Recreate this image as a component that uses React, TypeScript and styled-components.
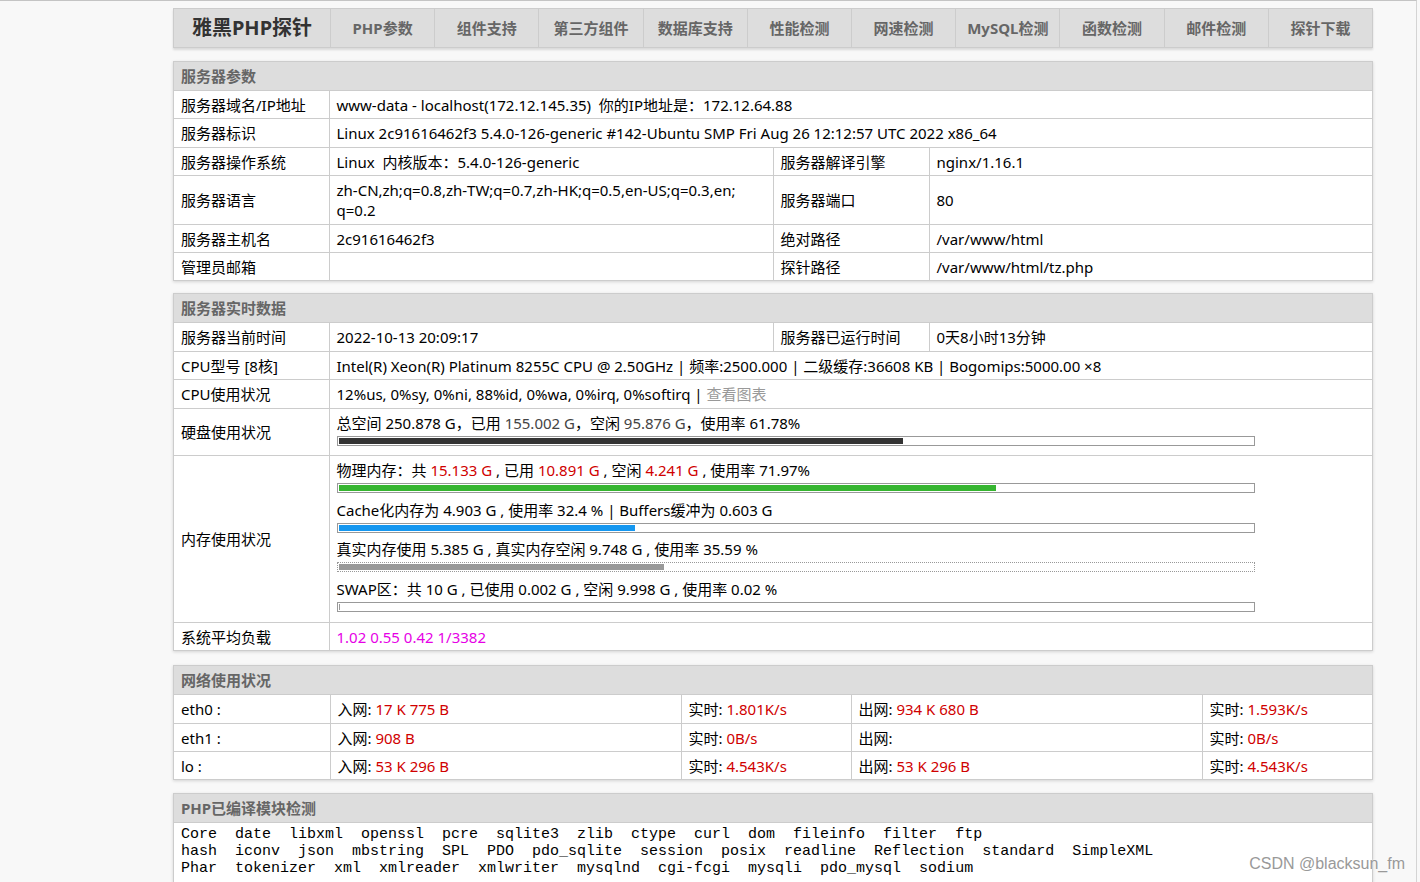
import React from 'react';
import styled, { createGlobalStyle } from 'styled-components';

const GlobalStyle = createGlobalStyle`
  html, body {
    margin: 0;
    padding: 0;
    background: #f8f8f8;
  }
  body {
    font-family: "Segoe UI", "Noto Sans", "Noto Sans CJK SC", sans-serif;
    font-size: 15px;
    color: #000;
  }
`;

const navItems = ['PHP参数', '组件支持', '第三方组件', '数据库支持', '性能检测', '网速检测', 'MySQL检测', '函数检测', '邮件检测', '探针下载'];

const modules = [
  ['Core', 'date', 'libxml', 'openssl', 'pcre', 'sqlite3', 'zlib', 'ctype', 'curl', 'dom', 'fileinfo', 'filter', 'ftp'],
  ['hash', 'iconv', 'json', 'mbstring', 'SPL', 'PDO', 'pdo_sqlite', 'session', 'posix', 'readline', 'Reflection', 'standard', 'SimpleXML'],
  ['Phar', 'tokenizer', 'xml', 'xmlreader', 'xmlwriter', 'mysqlnd', 'cgi-fcgi', 'mysqli', 'pdo_mysql', 'sodium'],
];

const netRows = [
  { name: 'eth0 :', rx: '17 K 775 B', rxRate: '1.801K/s', tx: '934 K 680 B', txRate: '1.593K/s' },
  { name: 'eth1 :', rx: '908 B', rxRate: '0B/s', tx: '', txRate: '0B/s' },
  { name: 'lo :', rx: '53 K 296 B', rxRate: '4.543K/s', tx: '53 K 296 B', txRate: '4.543K/s' },
];

const Page = styled.div`
  position: relative;
  box-sizing: border-box;
  width: 1417px;
  min-height: 882px;
  border-top: 1px solid #c4c4c4;
  border-right: 1px solid #d4d4d4;
  padding-top: 7px;
`;

const Container = styled.div`
  width: 1200px;
  margin-left: 173px;
`;

const Nav = styled.div`
  display: flex;
  height: 40px;
  background: #ddd;
  border: 1px solid #ccc;
  box-sizing: border-box;
  box-shadow: 0 2px 2px rgba(0, 0, 0, 0.12);
`;

const Logo = styled.div`
  width: 156px;
  flex-shrink: 0;
  text-align: center;
  line-height: 38px;
  font-size: 20px;
  font-weight: bold;
  color: #333;
`;

const NavItem = styled.div`
  flex: 1;
  border-left: 1px solid #ccc;
  text-align: center;
  line-height: 38px;
  font-size: 15px;
  font-weight: bold;
  color: #666;
`;

const Section = styled.div<{ $gap: number }>`
  margin-top: ${(p) => p.$gap}px;
  background: #fff;
  border: 1px solid #ccc;
  box-shadow: 0 1px 3px rgba(0, 0, 0, 0.15);
`;

const SectionTitle = styled.div`
  height: 28px;
  line-height: 28px;
  padding: 0 7px;
  background: #ddd;
  border-bottom: 1px solid #ccc;
  font-size: 15px;
  font-weight: bold;
  color: #666;
`;

const Table = styled.table`
  width: 100%;
  border-collapse: collapse;
  table-layout: fixed;

  td {
    padding: 4px 7px 3.4px;
    line-height: 20px;
    border-left: 1px solid #ccc;
    border-bottom: 1px solid #ccc;
    vertical-align: middle;
    word-wrap: break-word;
  }
  td:first-child {
    border-left: none;
  }
  tr:last-child td {
    border-bottom: none;
  }
`;

const Red = styled.span`
  color: #d00000;
`;

const Dim = styled.span`
  color: #444;
`;

const Muted = styled.span`
  color: #999;
`;

const Magenta = styled.span`
  color: #e600e6;
`;

const Bar = styled.div<{ $dotted?: boolean }>`
  box-sizing: border-box;
  width: 918px;
  height: 10px;
  padding: 1px;
  margin: 3px 0 6.5px;
  border: 1px ${(p) => (p.$dotted ? 'dotted' : 'solid')} #999;
`;

const BarFill = styled.div<{ $color: string }>`
  height: 100%;
  background: ${(p) => p.$color};
`;

const Usage = ({ pct, color, dotted }: { pct: number; color: string; dotted?: boolean }) => (
  <Bar $dotted={dotted}>
    <BarFill $color={color} style={{ width: `${pct}%` }} />
  </Bar>
);

const ModuleBox = styled.div`
  padding: 3px 7px 5px;
  font-family: "Liberation Mono", "Courier New", monospace;
  font-size: 15px;
  line-height: 17px;
  white-space: pre;
`;

const Watermark = styled.div`
  position: absolute;
  right: 11px;
  top: 854px;
  font-family: "Liberation Sans", Arial, sans-serif;
  font-size: 16px;
  color: #999;
  text-shadow: 0 0 2px #fff;
`;

const InfoCols = () => (
  <colgroup>
    <col style={{ width: 155 }} />
    <col style={{ width: 444 }} />
    <col style={{ width: 156 }} />
    <col style={{ width: 443 }} />
  </colgroup>
);

const App: React.FC = () => (
  <Page>
    <GlobalStyle />
    <Container>
      <Nav>
        <Logo>雅黑PHP探针</Logo>
        {navItems.map((item) => (
          <NavItem key={item}>{item}</NavItem>
        ))}
      </Nav>

      <Section $gap={13}>
        <SectionTitle>服务器参数</SectionTitle>
        <Table>
          <InfoCols />
          <tbody>
            <tr>
              <td>服务器域名/IP地址</td>
              <td colSpan={3}>www-data - localhost(172.12.145.35)&nbsp;&nbsp;你的IP地址是：172.12.64.88</td>
            </tr>
            <tr>
              <td>服务器标识</td>
              <td colSpan={3}>Linux 2c91616462f3 5.4.0-126-generic #142-Ubuntu SMP Fri Aug 26 12:12:57 UTC 2022 x86_64</td>
            </tr>
            <tr>
              <td>服务器操作系统</td>
              <td>Linux&nbsp;&nbsp;内核版本：5.4.0-126-generic</td>
              <td>服务器解译引擎</td>
              <td>nginx/1.16.1</td>
            </tr>
            <tr>
              <td>服务器语言</td>
              <td>
                zh&#8209;CN,zh;q=0.8,zh&#8209;TW;q=0.7,zh&#8209;HK;q=0.5,en&#8209;US;q=0.3,en;
                <wbr />
                q=0.2
              </td>
              <td>服务器端口</td>
              <td>80</td>
            </tr>
            <tr>
              <td>服务器主机名</td>
              <td>2c91616462f3</td>
              <td>绝对路径</td>
              <td>/var/www/html</td>
            </tr>
            <tr>
              <td>管理员邮箱</td>
              <td></td>
              <td>探针路径</td>
              <td>/var/www/html/tz.php</td>
            </tr>
          </tbody>
        </Table>
      </Section>

      <Section $gap={12}>
        <SectionTitle>服务器实时数据</SectionTitle>
        <Table>
          <InfoCols />
          <tbody>
            <tr>
              <td>服务器当前时间</td>
              <td>2022-10-13 20:09:17</td>
              <td>服务器已运行时间</td>
              <td>0天8小时13分钟</td>
            </tr>
            <tr>
              <td>CPU型号 [8核]</td>
              <td colSpan={3}>
                Intel(R) Xeon(R) Platinum 8255C CPU @ 2.50GHz | 频率:2500.000 | 二级缓存:36608 KB | Bogomips:5000.00 ×8
              </td>
            </tr>
            <tr>
              <td>CPU使用状况</td>
              <td colSpan={3}>
                12%us, 0%sy, 0%ni, 88%id, 0%wa, 0%irq, 0%softirq | <Muted>查看图表</Muted>
              </td>
            </tr>
            <tr>
              <td>硬盘使用状况</td>
              <td colSpan={3}>
                总空间 250.878 G，已用 <Dim>155.002 G</Dim>，空闲 <Dim>95.876 G</Dim>，使用率 61.78%
                <Usage pct={61.78} color="#333" />
              </td>
            </tr>
            <tr>
              <td>内存使用状况</td>
              <td colSpan={3}>
                物理内存：共 <Red>15.133 G</Red> , 已用 <Red>10.891 G</Red> , 空闲 <Red>4.241 G</Red> , 使用率 71.97%
                <Usage pct={71.97} color="#36b530" />
                Cache化内存为 4.903 G , 使用率 32.4 % | Buffers缓冲为 0.603 G
                <Usage pct={32.4} color="#1597f0" />
                真实内存使用 5.385 G , 真实内存空闲 9.748 G , 使用率 35.59 %
                <Usage pct={35.59} color="#999" dotted />
                SWAP区：共 10 G , 已使用 0.002 G , 空闲 9.998 G , 使用率 0.02 %
                <Usage pct={0.02} color="#999" />
              </td>
            </tr>
            <tr>
              <td>系统平均负载</td>
              <td colSpan={3}>
                <Magenta>1.02 0.55 0.42 1/3382</Magenta>
              </td>
            </tr>
          </tbody>
        </Table>
      </Section>

      <Section $gap={14}>
        <SectionTitle>网络使用状况</SectionTitle>
        <Table>
          <colgroup>
            <col style={{ width: 156 }} />
            <col style={{ width: 351 }} />
            <col style={{ width: 170 }} />
            <col style={{ width: 351 }} />
            <col style={{ width: 170 }} />
          </colgroup>
          <tbody>
            {netRows.map((r) => (
              <tr key={r.name}>
                <td>{r.name}</td>
                <td>
                  入网: <Red>{r.rx}</Red>
                </td>
                <td>
                  实时: <Red>{r.rxRate}</Red>
                </td>
                <td>
                  出网: <Red>{r.tx}</Red>
                </td>
                <td>
                  实时: <Red>{r.txRate}</Red>
                </td>
              </tr>
            ))}
          </tbody>
        </Table>
      </Section>

      <Section $gap={13}>
        <SectionTitle>PHP已编译模块检测</SectionTitle>
        <ModuleBox>
          {modules.map((line, i) => (
            <div key={i}>{line.join('  ')}</div>
          ))}
        </ModuleBox>
      </Section>
    </Container>
    <Watermark>CSDN @blacksun_fm</Watermark>
  </Page>
);

export default App;
